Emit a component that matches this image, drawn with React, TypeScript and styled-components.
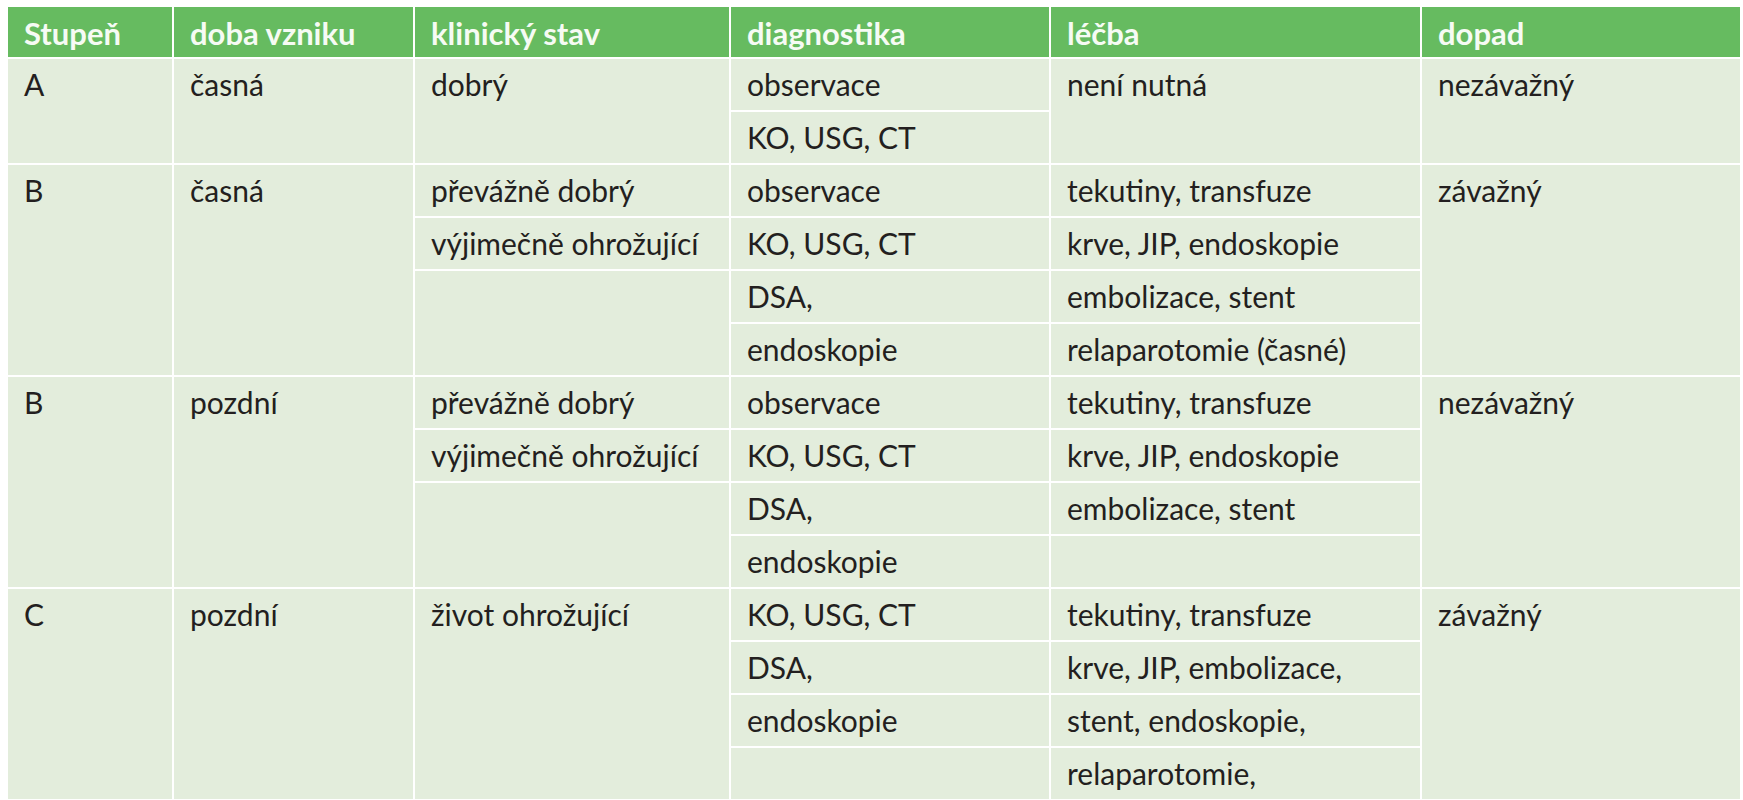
import React from "react";
import styled, { createGlobalStyle } from "styled-components";

const GlobalStyle = createGlobalStyle`
  html, body {
    margin: 0;
    padding: 0;
    background: #ffffff;
  }
  body {
    font-family: "Lato", "Open Sans", sans-serif;
  }
`;

const Page = styled.div`
  padding: 5px 4px 0 6px;
`;

const StyledTable = styled.table`
  width: 1734px;
  table-layout: fixed;
  border-collapse: collapse;
  font-family: "Lato", "Open Sans", sans-serif;
  text-align: left;

  th, td {
    border: 2px solid #ffffff;
    padding: 0 16px;
    overflow: hidden;
    white-space: nowrap;
  }

  th {
    height: 48px;
    background-color: #66bb60;
    color: #f6fbf4;
    font-size: 31px;
    font-weight: 700;
    vertical-align: middle;
    padding-top: 2px;
    line-height: 36px;
  }

  td {
    height: 44px;
    background-color: #e3eddc;
    color: #231f20;
    font-size: 30px;
    font-weight: 400;
    vertical-align: top;
    padding-top: 7px;
    line-height: 36px;
  }
`;

type Cell = { text: string; span?: number };

type Group = {
  grade: string;
  onset: string;
  clinical: Cell[];
  diagnostics: Cell[];
  treatment: Cell[];
  impact: string;
  rows: number;
};

const columns = [
  { title: "Stupeň", width: 166 },
  { title: "doba vzniku", width: 241 },
  { title: "klinický stav", width: 316 },
  { title: "diagnostika", width: 320 },
  { title: "léčba", width: 371 },
  { title: "dopad", width: 320 },
];

const groups: Group[] = [
  {
    grade: "A",
    onset: "časná",
    clinical: [{ text: "dobrý", span: 2 }],
    diagnostics: [{ text: "observace" }, { text: "KO, USG, CT" }],
    treatment: [{ text: "není nutná", span: 2 }],
    impact: "nezávažný",
    rows: 2,
  },
  {
    grade: "B",
    onset: "časná",
    clinical: [{ text: "převážně dobrý" }, { text: "výjimečně ohrožující" }, { text: "", span: 2 }],
    diagnostics: [{ text: "observace" }, { text: "KO, USG, CT" }, { text: "DSA," }, { text: "endoskopie" }],
    treatment: [
      { text: "tekutiny, transfuze" },
      { text: "krve, JIP, endoskopie" },
      { text: "embolizace, stent" },
      { text: "relaparotomie (časné)" },
    ],
    impact: "závažný",
    rows: 4,
  },
  {
    grade: "B",
    onset: "pozdní",
    clinical: [{ text: "převážně dobrý" }, { text: "výjimečně ohrožující" }, { text: "", span: 2 }],
    diagnostics: [{ text: "observace" }, { text: "KO, USG, CT" }, { text: "DSA," }, { text: "endoskopie" }],
    treatment: [
      { text: "tekutiny, transfuze" },
      { text: "krve, JIP, endoskopie" },
      { text: "embolizace, stent" },
      { text: "" },
    ],
    impact: "nezávažný",
    rows: 4,
  },
  {
    grade: "C",
    onset: "pozdní",
    clinical: [{ text: "život ohrožující", span: 4 }],
    diagnostics: [{ text: "KO, USG, CT" }, { text: "DSA," }, { text: "endoskopie" }, { text: "" }],
    treatment: [
      { text: "tekutiny, transfuze" },
      { text: "krve, JIP, embolizace," },
      { text: "stent, endoskopie," },
      { text: "relaparotomie," },
    ],
    impact: "závažný",
    rows: 4,
  },
];

// which cell of a stacked column starts on a given sub-row
const cellAt = (cells: Cell[], row: number) => {
  let start = 0;
  for (const cell of cells) {
    if (start === row) return cell;
    start += cell.span ?? 1;
  }
  return null;
};

export default function App() {
  return (
    <>
      <GlobalStyle />
      <Page>
        <StyledTable>
          <colgroup>
            {columns.map((c) => (
              <col key={c.title} style={{ width: c.width }} />
            ))}
          </colgroup>
          <thead>
            <tr>
              {columns.map((c) => (
                <th key={c.title}>{c.title}</th>
              ))}
            </tr>
          </thead>
          <tbody>
            {groups.map((g, gi) =>
              Array.from({ length: g.rows }).map((_, r) => {
                const clinical = cellAt(g.clinical, r);
                const diag = cellAt(g.diagnostics, r);
                const treat = cellAt(g.treatment, r);
                return (
                  <tr key={`${gi}_${r}`}>
                    {r === 0 && <td rowSpan={g.rows}>{g.grade}</td>}
                    {r === 0 && <td rowSpan={g.rows}>{g.onset}</td>}
                    {clinical && <td rowSpan={clinical.span ?? 1}>{clinical.text}</td>}
                    {diag && <td rowSpan={diag.span ?? 1}>{diag.text}</td>}
                    {treat && <td rowSpan={treat.span ?? 1}>{treat.text}</td>}
                    {r === 0 && <td rowSpan={g.rows}>{g.impact}</td>}
                  </tr>
                );
              })
            )}
          </tbody>
        </StyledTable>
      </Page>
    </>
  );
}
